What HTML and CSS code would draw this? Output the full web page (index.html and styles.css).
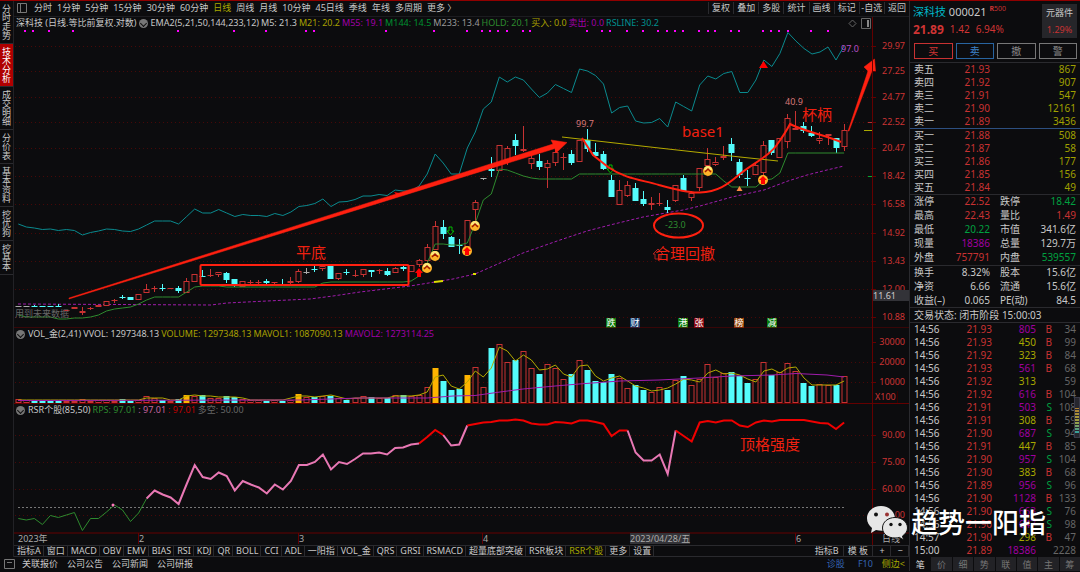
FILE: index.html
```html
<!DOCTYPE html>
<html lang="zh-CN">
<head>
  <meta charset="UTF-8">
  <title>深科技 000021</title>
  <link rel="stylesheet" href="styles.css">
</head>
<body>

  <div class="workspace">
    <nav class="rail">
      <button>分时走势</button>
      <button class="active">技术分析</button>
      <button>成交明细</button>
      <button>分价表</button>
      <button>基本资料</button>
      <button>挖优狗</button>
      <button>挖基本</button>
    </nav>

    <main class="charts">
      <div class="periods">
        <svg class="layout-icon" viewBox="0 0 12 12"><path d="M1.5 1.500h9v9h-9zM4.500 1.500v9"/></svg>
        <div class="period-list">
          <button>分时</button>
          <button>1分钟</button>
          <button>5分钟</button>
          <button>15分钟</button>
          <button>30分钟</button>
          <button>60分钟</button>
          <button class="active">日线</button>
          <button>周线</button>
          <button>月线</button>
          <button>10分钟</button>
          <button>45日线</button>
          <button>季线</button>
          <button>年线</button>
          <button>多周期</button>
          <button>更多 〉</button>
        </div>
        <div class="tools">
          <button>复权</button>
          <button>叠加</button>
          <button>多股</button>
          <button>统计</button>
          <button>画线</button>
          <button>标记</button>
          <button>-自选</button>
          <button>返回</button>
        </div>
      </div>

      <section class="pane">
        <svg id="price" class="plot" viewBox="14 17 895 311">
          <g class="grid" id="priceGrid"></g>
          <g id="dots" fill="#f0f"></g>
          <polyline class="purple dash" points="18,304 211,305 227,303 267,301 310,299 333,296 360,292 385,289 410,286 435,282 453,279 475,274 500,263 523,253 560,240 587,231 610,225 643,217 683,210 700,206 732,197 764,190 788,181 807,175 827,170 844,166"/>
          <path d="M434 282l9-1M473 274h3" stroke="#dd0" stroke-width="2"/>
          <g id="candles"></g>
          <polyline id="rsLine" class="teal"/>
          <polyline id="holdLine" class="green"/>
          <polyline class="yellow" points="562,137 659,148 740,157 778,161"/>
          <text class="note" x="15" y="317">用到未来数据</text>

          <!-- buy / sell marks -->
          <g id="coins"></g>
          <path class="up" d="M419 268l4 5h-2v4h-4v-4h-2zM763.500 61l4.500 7h-9zM394 192l5 1-1 4z"/>
          <path d="M739.500 186l3 5h-6z" fill="#f84"/>
          <path class="down" d="M449 227h3v4h2l-3.500 4-3.500-4h2zM609 165h3v4h2l-3.500 4-3.500-4h2z"/>
          <path class="house" d="M655 259v-5h-2l5-5 5 5h-2v5z"/>

          <!-- hand drawn notes -->
          <path class="arrow" d="M69 298L553 144 551 140 567 142.500 556 153 555 148.500 69 299z"/>
          <path class="arrow" d="M848 131L868 71 864 67 874.500 59 875.500 71 872 71 849 131z"/>
          <path class="pen" d="M582 138L593 155 608 167C625 179 643 180 659 185C680 191 690 193 700 192.500C720 192 730 182 740 174C755 162 768 157 776 146C784 135 788 128 790 124C803 131 822 134 841 142"/>
          <rect class="pen" x="200.500" y="265" width="208" height="20" rx="1"/>
          <ellipse class="pen" cx="678.500" cy="225.500" rx="24.500" ry="12"/>
          <text class="memo" x="296" y="258">平底</text>
          <text class="memo" x="682" y="137">base1</text>
          <text class="memo" x="655" y="259">合理回撤</text>
          <text class="memo" x="802" y="120">杯柄</text>
          <text class="mark pink" x="576" y="127">99.7</text>
          <text class="mark pink" x="785" y="105">40.9</text>
          <text class="mark violet" x="841" y="52">97.0</text>
          <text class="mark green-text" x="665" y="228">-23.0</text>

          <g id="tags"></g>
          <path d="M868 122.500h4" stroke="#a33"/>
          <path d="M864 130.500h8" stroke="#aa0"/>
          <path d="M868 176.500h4" stroke="#0a3"/>
          <path class="frame" d="M14 328H909M872.500 17V328"/>
          <g class="axis" id="priceAxis"></g>
          <rect x="873" y="290" width="36" height="11" fill="#333338"/>
          <text class="cursor" x="873" y="299">11.61</text>
          <path class="tool-icon" d="M849 23.500l3.500-3.500 3.500 3.500-3.500 3.500zM861.500 18.500h9v10h-9z"/>
          <path d="M867 20h2v7h-2z" fill="#888"/>
        </svg>
        <div class="legend">
          <span>深科技 (日线.等比前复权.对数)</span>
          <i class="fold"></i>
          <span>EMA2(5,21,50,144,233,12)</span>
          <span>M5: 21.3</span>
          <span class="c-yellow">M21: 20.2</span>
          <span class="c-purple">M55: 19.1</span>
          <span class="c-green">M144: 14.5</span>
          <span class="c-gray">M233: 13.4</span>
          <span class="c-hold">HOLD: 20.1</span>
          <span class="c-yellow">买入: 0.0</span>
          <span class="c-purple">卖出: 0.0</span>
          <span class="c-teal">RSLINE: 30.2</span>
        </div>
      </section>

      <section class="pane">
        <svg id="volume" class="plot" viewBox="14 328 895 76">
          <path class="grid" d="M15 362.500H872M15 382.500H872"/>
          <g id="bars"></g>
          <polyline id="mavol1" class="yellow"/>
          <polyline class="purple" points="18,400.500 300,400 360,398 427,398 453,396 475,395.500 500,392 523,389 555,386 579,384 620,381 659,380 699,378 732,376 772,375 796,373.500 827,375 844,377"/>
          <path class="frame" d="M14 403.500H909M872.500 328V404"/>
          <g class="axis" id="volAxis"></g>
          <path d="M897.500 391v12" stroke="#300"/>
          <text class="axis-unit" x="875" y="400">X100</text>
        </svg>
        <div class="legend">
          <i class="fold"></i>
          <span>VOL_金(2,41)</span>
          <span>VVOL: 1297348.13</span>
          <span class="c-yellow">VOLUME: 1297348.13</span>
          <span class="c-yellow">MAVOL1: 1087090.13</span>
          <span class="c-purple">MAVOL2: 1273114.25</span>
        </div>
      </section>

      <section class="pane">
        <svg id="strength" class="plot" viewBox="14 404 895 141">
          <path class="grid" d="M15 435.500H872M15 462.500H872M15 489.500H872M15 515.500H872"/>
          <path class="half" d="M18 507.500H844"/>
          <g id="rsr"></g>
          <circle cx="113" cy="505" r="1.500" fill="#f7b"/>
          <text class="memo" x="740" y="450">顶格强度</text>
          <path class="frame" d="M14 533H909M872.500 404V545M138.500 533v11M298.500 533v11M482.500 533v11M795.500 533v11"/>
          <g class="axis" id="rsrAxis"></g>
          <rect x="630" y="533" width="60" height="11" fill="#333338"/>
          <g class="dates">
            <text x="18" y="542">2023年</text>
            <text x="139" y="542">2</text>
            <text x="299" y="542">3</text>
            <text x="483" y="542">4</text>
            <text x="630" y="542">2023/04/28/五</text>
            <text x="796" y="542">6</text>
            <text x="882" y="542">日线</text>
          </g>
        </svg>
        <div class="legend">
          <i class="fold"></i>
          <span>RSR个股(85,50)</span>
          <span class="c-hold">RPS: 97.01</span>
          <span class="c-pink">: 97.01</span>
          <span class="c-red">: 97.01</span>
          <span class="c-dim">多空: 50.00</span>
        </div>
      </section>

      <div class="indicators">
        <button>指标A</button>
        <button>窗口</button>
        <button>MACD</button>
        <button>OBV</button>
        <button>EMV</button>
        <button>BIAS</button>
        <button>RSI</button>
        <button>KDJ</button>
        <button>QR</button>
        <button>BOLL</button>
        <button>CCI</button>
        <button>ADL</button>
        <button>一阳指</button>
        <button>VOL_金</button>
        <button>QRS</button>
        <button>GRSI</button>
        <button>RSMACD</button>
        <button>超量底部突破</button>
        <button>RSR板块</button>
        <button class="active">RSR个股</button>
        <button>更多</button>
        <button>设置</button>
        <span class="spacer"></span>
        <button class="wide">指标B</button>
        <button class="wide">模 板</button>
        <button class="zoom-btn">+</button>
        <button class="zoom-btn">−</button>
      </div>
    </main>

    <footer class="links">
      <svg class="window-icon" viewBox="0 0 11 11"><path d="M.5 .5h10v9h-10zM3 3.500h5"/></svg>
      <a href="#">关联报价</a>
      <a href="#">公司公告</a>
      <a href="#">公司新闻</a>
      <a href="#">公司研报</a>
      <span class="spacer"></span>
      <a href="#" class="blue">诊股</a>
      <a href="#" class="blue f10">F10</a>
      <a href="#" class="side">侧边&lt;</a>
    </footer>
  </div>

  <aside class="quote">
    <header class="stock">
      <div>
        <div class="name"><span class="c-cyan">深科技</span> 000021 <sup><b>R</b>500</sup></div>
        <div class="last"><b>21.89</b><span>1.42</span><span>6.94%</span></div>
      </div>
      <div class="sector">元器件<span>1.29%</span></div>
    </header>

    <div class="orders">
      <button class="buy">买</button>
      <button class="sell">卖</button>
      <button>撤</button>
      <button>警</button>
    </div>

    <table class="book">
      <tbody>
        <tr><th>卖五</th><td>21.93</td><td>867</td></tr>
        <tr><th>卖四</th><td>21.92</td><td>907</td></tr>
        <tr><th>卖三</th><td>21.91</td><td>547</td></tr>
        <tr><th>卖二</th><td>21.90</td><td>12161</td></tr>
        <tr><th>卖一</th><td>21.89</td><td>3436</td></tr>
      </tbody>
    </table>
    <table class="book bids">
      <tbody>
        <tr><th>买一</th><td>21.88</td><td>508</td></tr>
        <tr><th>买二</th><td>21.87</td><td>58</td></tr>
        <tr><th>买三</th><td>21.86</td><td>177</td></tr>
        <tr><th>买四</th><td>21.85</td><td>156</td></tr>
        <tr><th>买五</th><td>21.84</td><td>49</td></tr>
      </tbody>
    </table>

    <table class="facts">
      <tbody>
        <tr><th>涨停</th><td class="up">22.52</td><th>跌停</th><td class="dn">18.42</td></tr>
        <tr><th>最高</th><td class="up">22.43</td><th>量比</th><td class="up">1.49</td></tr>
        <tr><th>最低</th><td class="dn">20.22</td><th>市值</th><td>341.6亿</td></tr>
        <tr><th>现量</th><td class="big">18386</td><th>总量</th><td>129.7万</td></tr>
        <tr><th>外盘</th><td class="up">757791</td><th>内盘</th><td class="dn">539557</td></tr>
      </tbody>
    </table>
    <table class="facts">
      <tbody>
        <tr><th>换手</th><td>8.32%</td><th>股本</th><td>15.6亿</td></tr>
        <tr><th>净资</th><td>6.66</td><th>流通</th><td>15.6亿</td></tr>
        <tr><th>收益(–)</th><td>0.065</td><th>PE(动)</th><td>84.5</td></tr>
      </tbody>
    </table>

    <div class="status">交易状态: 闭市阶段 15:00:03</div>

    <table class="ticks"><tbody id="ticks"></tbody></table>

    <div class="quote-tabs">
      <button class="active">笔</button>
      <button>价</button>
      <button>细</button>
      <button>势</button>
      <button>联</button>
      <button>值</button>
      <button>主</button>
      <button>筹</button>
    </div>
  </aside>

  <div class="meter"></div>

  <div class="watermark">
    <svg viewBox="0 0 42 36">
      <path d="M15 1C7 1 1 6.500 1 13.500c0 4 2 7 5 9.500l-1 5 5-3c2 .6 4 .8 6 .8C23 25.500 29 20 29 13.500S23 1 15 1z" fill="#e6e6e6"/>
      <path d="M29 12.500c-7 0-12.500 4.500-12.500 10.500S22 33 29 33c1.500 0 3-.2 4.500-.6l4 2.600-1-4c3-2 5-5 5-8 0-6-5.500-10.500-12.500-10.500z" fill="#e6e6e6" stroke="#111"/>
      <g fill="#111"><circle cx="10" cy="9.500" r="2"/><circle cx="25" cy="19.500" r="1.700"/><circle cx="34" cy="19.500" r="1.700"/></g>
      <circle cx="21" cy="9.500" r="2" fill="#933"/>
    </svg>
    <span>趋势一阳指</span>
  </div>

  <script src="chart.js"></script>
</body>
</html>
```
FILE: styles.css
```css
* {
  box-sizing: border-box;
}

body {
  margin: 0;
  min-height: 100vh;
  display: grid;
  grid-template-columns: minmax(0, 1fr) 171px;
  align-items: start;
  position: relative;
  background: #0c0c0e;
  border-top: 1px solid #900000;
  color: #c8c8c8;
  font-family: "Noto Sans", "Noto Sans CJK SC", sans-serif;
  font-size: 9px;
  line-height: 12px;
}

button {
  margin: 0;
  padding: 0;
  border: 0;
  background: none;
  color: inherit;
  font: inherit;
  white-space: nowrap;
  cursor: pointer;
}

a {
  color: inherit;
  text-decoration: none;
}

.workspace {
  display: grid;
  grid-template-columns: 14px minmax(0, 1fr);
}

/* left rail */
.rail {
  display: flex;
  flex-direction: column;
  border-right: 1px solid #222226;
}

.rail button {
  width: 13px;
  padding: 3px 0;
  border-bottom: 1px solid #2a2a2e;
  writing-mode: vertical-rl;
  text-align: left;
  line-height: 13px;
}

.rail button.active {
  background: #b00000;
  color: #fff;
}

/* top bar */
.periods {
  display: flex;
  align-items: center;
  height: 16px;
  padding-bottom: 1px;
  border-bottom: 1px solid #1c1c20;
}

.layout-icon {
  width: 12px;
  height: 12px;
  margin: 0 6px 0 2px;
  fill: none;
  stroke: #777;
}

.period-list {
  display: flex;
  flex: 1;
  gap: 5px;
}

.active {
  color: #a8a800;
}

.tools {
  display: flex;
  width: 201px;
}

.tools button {
  flex: 1;
  border-left: 1px solid #2a2a2e;
}

/* chart panes: the legend lies on the plot */
.pane {
  display: grid;
}

.pane > * {
  grid-area: 1 / 1;
}

.plot {
  display: block;
  width: 100%;
}

.legend {
  display: flex;
  align-items: center;
  align-self: start;
  gap: 2px;
  height: 12px;
  padding-left: 2px;
  white-space: nowrap;
}

.fold {
  width: 9px;
  height: 9px;
  margin-right: 1px;
  border-radius: 50%;
  background: #777;
  display: grid;
  place-items: center;
}

.fold::before {
  content: "";
  width: 4px;
  height: 4px;
  border: solid #111;
  border-width: 0 1px 1px 0;
  transform: rotate(45deg);
}

.c-yellow { color: #a8a000; }
.c-purple { color: #a000a8; }
.c-green { color: #009030; }
.c-gray { color: #999; }
.c-hold { color: #2e8b2e; }
.c-teal { color: #009090; }
.c-cyan { color: #00b8c8; }
.c-pink { color: #c864a0; }
.c-red { color: #c00000; }
.c-dim { color: #666; }

svg text {
  font-size: 9px;
}

polyline {
  fill: none;
  stroke-width: 1;
}

.grid { stroke: #480808; stroke-dasharray: 1 3; }
.frame { stroke: #640000; fill: none; }
.teal { stroke: #0a8a8e; }
.green { stroke: #2e8a2e; }
.yellow { stroke: #b4aa00; }
.purple { stroke: #a01cac; }
.dash { stroke-dasharray: 3 2; }
.half { stroke: #777; stroke-dasharray: 2 2; }
.rise { stroke: #c83232; fill: #0c0c0e; }
.fall { stroke: #54fcfc; fill: #54fcfc; }
.hot { stroke: #ffb400; fill: #ffb400; }
.flat { stroke: #aaa; fill: #aaa; }
.strong { stroke: #f00000; stroke-width: 2; }
.mid { stroke: #e878b4; stroke-width: 2; }

.axis text {
  fill: #cc3434;
  text-anchor: end;
}

.axis path { stroke: #640000; }
.axis-unit { fill: #cc3434; }
.cursor { fill: #ccc; }
.dates { fill: #aaa; }
.note { fill: #666; }
.tool-icon { fill: none; stroke: #666; }

svg .memo {
  fill: #f02010;
  font-size: 15px;
}

.pen {
  fill: none;
  stroke: #ff2010;
  stroke-width: 2;
}

.arrow { fill: #ff2010; stroke: #ff2010; stroke-width: 0.5; }
.up { fill: #f00; }
.down { fill: none; stroke: #0b0; }
.house { fill: none; stroke: #a22; }
.pink { fill: #d87878; }
.violet { fill: #b450c8; }
.green-text { fill: #2e8b2e; }

.tag text {
  fill: #fff;
  text-anchor: middle;
}

/* bottom bars */
.indicators {
  display: flex;
  height: 12px;
  border-top: 1px solid #2a2a2e;
  border-bottom: 1px solid #2a2a2e;
  line-height: 10px;
}

.indicators button {
  padding: 0 2px 0 3px;
  border-right: 1px solid #2a2a2e;
}

.indicators .wide {
  padding: 0 4px;
}

.indicators .zoom-btn {
  width: 18px;
}

.spacer {
  flex: 1;
}

.links {
  grid-column: 1 / -1;
  display: flex;
  align-items: center;
  gap: 9px;
  height: 14px;
  padding: 0 4px;
}

.window-icon {
  width: 11px;
  height: 11px;
  margin-right: -2px;
  fill: none;
  stroke: #777;
}

.blue { color: #3464b4; }
.f10 { margin-left: 4px; }
.side { color: #a8a800; }

/* quote panel */
.quote {
  border-left: 1px solid #2a2a2e;
  font-size: 10px;
  line-height: 13px;
}

.stock {
  display: flex;
  justify-content: space-between;
  padding: 3px 3px 4px;
}

.name {
  font-size: 11px;
  line-height: 15px;
}

.name sup {
  color: #c83232;
  font-size: 7px;
  line-height: 0;
}

.last {
  display: flex;
  align-items: center;
  gap: 6px;
  height: 20px;
  color: #d03434;
}

.last b {
  font-size: 12px;
}

.sector {
  width: 35px;
  height: 34px;
  padding-top: 2px;
  background: #26262a;
  font-size: 9px;
  text-align: center;
}

.sector span {
  display: block;
  margin-top: 4px;
  color: #c83232;
}

.orders {
  display: grid;
  grid-template-columns: repeat(4, 1fr);
  gap: 3px;
  padding: 0 3px 3px 4px;
  border-bottom: 1px solid #2a2a2e;
}

.orders button {
  height: 16px;
  border: 1px solid #777;
  color: #888;
}

.orders .buy { border-color: #c83232; color: #d03434; }
.orders .sell { border-color: #2864a0; color: #3c82c8; }

table {
  width: 100%;
  border-collapse: collapse;
  table-layout: fixed;
}

th, td {
  padding: 0;
  font-weight: normal;
  text-align: right;
  white-space: nowrap;
}

th:first-child, .facts th {
  padding-left: 4px;
  text-align: left;
}

td:last-child {
  padding-right: 4px;
}

.book td { color: #c83232; width: 49px; }
.book th { width: 31px; }
.book td:last-child { color: #a0a000; width: auto; }
.bids { border-top: 1px solid #2d4f80; }

.book tr, .ticks tr { height: 13px; }
.facts tr { height: 14px; }
.facts { border-top: 1px solid #2a2a2e; }
.facts th { width: 43px; }
.facts td { width: 37px; }
.facts th + td + th { width: 46px; padding-left: 10px; }
.facts td:last-child { width: auto; }
.facts .up { color: #c83232; }
.facts .dn { color: #00a040; }
.facts .big { color: #a000a0; }

.status {
  height: 16px;
  padding: 1px 0 0 4px;
  border: solid #2a2a2e;
  border-width: 1px 0;
}

.ticks td { color: #c83232; }
.ticks td:first-child { width: 36px; padding-left: 4px; color: #c8c8c8; text-align: left; }
.ticks td:nth-child(2) { width: 46px; }
.ticks td:nth-child(3) { width: 44px; color: #a8a800; }
.ticks td:nth-child(4) { width: 16px; }
.ticks td:last-child { color: #666; }
.ticks .large td:nth-child(3) { color: #a000a0; }
.ticks .S td:nth-child(4) { color: #00a040; }

.quote-tabs {
  display: grid;
  grid-template-columns: repeat(8, 1fr);
  gap: 1px;
}

.quote-tabs button {
  height: 14px;
  background: #222226;
  color: #777;
  font-size: 9px;
}

.quote-tabs .active {
  background: none;
  color: #ddd;
}

/* overlays */
.meter {
  position: absolute;
  top: 396px;
  right: 0;
  width: 6px;
  height: 41px;
  border: 1px solid #3a3a48;
  background: repeating-linear-gradient(transparent 0 2px, #26262e 2px 3px), linear-gradient(#26262e 25%, #b08030 26%, #a0a040 60%, #30a0a0 90%, #26262e 91%);
}

.watermark {
  position: absolute;
  right: 34px;
  bottom: 31px;
  display: flex;
  align-items: center;
  gap: 3px;
  color: #fff;
  font-size: 27px;
  font-weight: 500;
  line-height: 36px;
  text-shadow: 0 0 2px #000;
}

.watermark svg {
  width: 42px;
  height: 36px;
}
```
FILE: chart.js
```js
const NS = 'http://www.w3.org/2000/svg';
const $ = id => document.getElementById(id);
const x = i => 18.3 + i * 8.017;

function add(parent, tag, attrs, text) {
  const el = document.createElementNS(NS, tag);
  for (const key in attrs) el.setAttribute(key, attrs[key]);
  if (text) el.textContent = text;
  parent.appendChild(el);
  return el;
}

const points = (ys, from = 0) => ys.map((y, i) => x(i + from).toFixed(1) + ',' + y).join(' ');

// r = rise, c = fall, g = flat: body top, body bottom, high, low
const candles = `
g306,306,306,306 g306,306,306,306 c306,306,305,307 c306,307,306,307 c306,306,306,306 c306,306,304,307
r310,310,310,311 r307,309,307,309 r311,313,307,315 r308,308,307,310 r305,307,305,307 r301,306,301,306
r300,301,299,303 c297,298,295,299 c297,300,297,300 r294,300,294,300 r289,293,284,293 r288,288,286,292
c288,288,284,291 r288,289,288,289 c288,291,286,293 r281,293,278,293 r274,282,274,282 c276,276,270,277
r275,276,269,277 r272,275,272,277 c273,280,272,283 c279,286,279,287 r281,287,281,287 r282,282,280,284
r282,282,280,284 c281,283,279,284 r282,283,282,284 c284,284,279,286 r281,283,277,284 r271,282,269,283
g272,272,268,274 c269,270,265,272 r266,269,266,271 c266,279,266,279 r273,279,273,280 c272,273,269,275
r275,275,270,277 r269,275,269,277 c270,272,270,277 r270,271,269,274 c271,275,268,276 r268,273,267,273
c267,269,264,271 r265,272,265,272 r260,265,259,267 r247,261,244,264 r226,250,221,250 c227,234,220,239
c237,247,236,247 c245,246,239,254 r220,247,220,247 r202,210,200,228 g178,178,178,180 c169,171,157,177
r145,171,145,171 r148,160,146,165 c140,146,134,155 r149,151,126,152 r158,164,155,169 c161,167,154,170
r163,168,160,188 r152,163,149,166 r157,158,153,170 c154,163,150,165 r140,162,140,162 c140,149,129,152
c152,156,143,158 c154,169,151,170 c180,197,175,197 r190,205,180,205 r185,196,181,197 c188,201,183,201
c199,204,191,206 r203,205,197,210 r203,204,193,206 c207,210,200,213 r185,201,185,202 c178,191,175,191
r193,198,191,201 r168,188,168,191 r159,166,148,172 r162,165,157,166 r156,158,146,160 c144,153,138,161
c162,175,159,178 c178,178,170,186 r165,175,163,175 r145,173,141,179 c140,153,140,155 r138,158,138,158
r118,142,114,148 r128,130,111,130 c126,131,122,133 c133,136,126,137 r138,141,132,144 r134,136,134,145
c138,148,138,153 r130,147,124,151`.trim().split(/\s+/).map(s => [s[0], ...s.slice(1).split(',').map(Number)]);

const volumes = [
  399, 400, 400, 401, 401, 401, 401, 401, 399, 401, 400, 400, 401, 399, 401, 400, 396, 398, 400, 401,
  399, 395, 396, 395, 398, 398, 396, 397, 399, 400, 400, 401, 400, 401, 400, 394, 397, 397, 396, 396,
  398, 400, 398, 396, 397, 398, 398, 395, 395, 396, 395, 387, 368, 381, 390, 389, 375, 367, 387, 348,
  344, 362, 360, 351, 368, 374, 364, 368, 379, 374, 360, 370, 381, 382, 374, 378, 388, 385, 390, 392,
  387, 390, 380, 376, 385, 379, 364, 377, 373, 372, 376, 383, 379, 362, 375, 372, 363, 371, 383, 386,
  384, 385, 385, 376];
const hotDays = [21, 35, 52, 56];

const rs = [
  224, 227, 228, 229.5, 229, 230.5, 229.5, 230.5, 235, 232.5, 231, 229, 229.5, 231, 231.5, 229, 225, 221, 221, 221,
  224, 216.5, 209, 213, 213, 209.5, 213, 216.5, 214.5, 215.5, 215.5, 216.5, 213.5, 215.5, 212, 206.5, 205.5, 203.5, 199, 206.5,
  202, 201.5, 199.5, 196, 196, 194.5, 195.5, 190, 191, 191, 186, 174, 154, 163, 174, 174, 148, 132, 109, 102,
  77, 82, 77, 80, 89, 97.5, 93, 84.5, 88.5, 92.5, 69, 71, 75.5, 84, 113, 107.5, 106, 121, 123, 122.5,
  118.5, 127, 102, 106.5, 111, 85, 76, 79, 73.5, 71.5, 92.5, 92.5, 80, 60, 66.5, 53.5, 32.5, 41, 48.5, 54,
  52, 47, 60, 46];

const hold = [
  315, 317, 317, 317, 317, 319, 319, 318, 318, 317, 315, 311, 309, 308, 307, 304, 300, 297, 297, 297,
  297, 292, 287, 286, 286, 286, 287, 287, 287, 287, 287, 287, 287, 287, 287, 287, 287, 287, 283, 282,
  282, 282, 282, 282, 282, 282, 282, 282, 282, 281, 276, 263, 244, 244, 245, 245, 243, 223, 200, 194,
  169, 170, 173, 176, 178, 179, 179, 179, 179, 179, 174, 174, 174, 174, 174, 174, 174, 174, 174, 174,
  174, 174, 174, 174, 174, 174, 174, 174, 181, 187, 187, 187, 187, 180, 179, 173, 153, 153, 153, 153,
  153, 153, 153, 153];

const mavol1 = [
  400, 400, 400, 400, 400, 400, 400, 400, 400, 400, 400, 400, 400, 400, 400, 400, 398, 398, 398, 400,
  400, 396, 395, 396, 396, 397, 397, 397, 398, 400, 400, 400, 400, 400, 398, 396, 396, 397, 396, 395,
  397, 399, 398, 398, 398, 398, 398, 396, 396, 396, 395, 392, 377, 375, 386, 389, 382, 371, 377, 368,
  347, 351, 361, 355, 360, 370, 369, 365, 374, 377, 366, 365, 376, 381, 378, 376, 381, 386, 388, 391,
  390, 388, 384, 379, 380, 382, 373, 370, 374, 373, 375, 379, 382, 371, 369, 373, 368, 367, 378, 385,
  385, 385, 385, 381];

const rsr = [
  518.5, 520, 518.5, 524.5, 515.5, 517.5, 515, 512.5, 530.5, 518.5, 518.5, 512, 505, 510, 521.5, 513, 498.5, 490.5, 494.5, 497.5,
  504, 484, 465, 477, 479, 472.5, 476, 490.5, 481, 484.5, 487.5, 493.5, 484.5, 489.5, 481, 465, 465, 462, 454.5, 469.5,
  462, 464, 459, 453.5, 453.5, 452.5, 454.5, 448, 447.5, 444.5, 443.5, 437, 430, 435, 445.5, 444.5, 425.5, 424, 422.5, 422,
  420.5, 420.5, 419.5, 420.5, 423.5, 424.5, 424.5, 422, 422.5, 423.5, 420.5, 420.5, 422, 424, 436, 430.5, 430.5, 452.5, 460.5, 460.5,
  454.5, 474, 430.5, 436, 441.5, 422.5, 421, 422.5, 420.5, 420.5, 425.5, 427, 422.5, 420.5, 421.5, 420, 420, 420, 420, 421.5,
  423, 423.5, 429, 422.5];

const kinds = { r: 'rise', c: 'fall', g: 'flat' };

candles.forEach(([kind, top, bottom, high, low], i) => {
  const cx = Math.round(x(i) - 0.5) + 0.5;
  const cls = kinds[kind];
  add($('candles'), 'path', { class: cls, d: `M${cx} ${high}V${low}` });
  if (bottom - top < 2) {
    add($('candles'), 'path', { class: cls, d: `M${cx - 3} ${top + 0.5}h6` });
  } else {
    add($('candles'), 'rect', { class: cls, x: cx - 2.5, y: top + 0.5, width: 5, height: bottom - top - 1 });
  }
});

volumes.forEach((top, i) => {
  const cx = Math.round(x(i) - 0.5) + 0.5;
  const cls = hotDays.includes(i) ? 'hot' : kinds[candles[i][0] === 'g' ? 'r' : candles[i][0]];
  add($('bars'), 'rect', { class: cls, x: cx - 2.5, y: top + 0.5, width: 5, height: 402 - top });
});

$('rsLine').setAttribute('points', points(rs));
$('holdLine').setAttribute('points', points(hold));
$('mavol1').setAttribute('points', points(mavol1));

[[0, 16, 'green'], [16, 50, 'mid'], [50, 53, 'strong'], [53, 56, 'mid'], [56, 76, 'strong'], [76, 82, 'mid'], [82, 103, 'strong']]
  .forEach(([a, b, cls]) => add($('rsr'), 'polyline', { class: cls, points: points(rsr.slice(a, b + 1), a) }));

[25, 33, 49, 73, 178, 234, 266, 306, 314, 386, 434, 467, 482, 490, 498, 507, 523, 530, 587, 602, 610, 627, 643,
  658, 667, 675, 683, 699, 708, 715, 731, 739, 763, 771, 779, 788, 811, 828]
  .forEach(dx => add($('dots'), 'rect', { x: dx - 1, y: 30, width: 2, height: 2 }));

function axis(group, rows) {
  rows.forEach(([label, y]) => {
    add(group, 'path', { d: `M872 ${y}.5h4` });
    add(group, 'text', { x: 905, y: y + 3 }, label);
  });
}

const prices = [['29.97', 46], ['27.25', 71], ['24.77', 97], ['22.52', 122], ['20.47', 148], ['18.42', 176],
  ['16.58', 204], ['14.92', 233], ['13.43', 261], ['12.00', 289], ['10.88', 317]];
axis($('priceAxis'), prices);
prices.forEach(([, y]) => add($('priceGrid'), 'path', { d: `M15 ${y}.5H872` }));
axis($('volAxis'), [['30000', 342], ['20000', 362], ['10000', 382]]);
axis($('rsrAxis'), [['90.00', 435], ['75.00', 462], ['60.00', 489], ['45.00', 515]]);

// gold coins under the candles
[[427, 268, 0], [435, 256, 0], [475, 226, 0], [708, 171, 0], [467, 251, 1], [763, 180, 1]].forEach(([cx, cy, strong]) => {
  const g = add($('coins'), 'g', { transform: `translate(${cx} ${cy})` });
  add(g, 'circle', { r: 5, fill: '#ffb428' });
  if (strong) {
    add(g, 'path', { d: 'M0 -4L4 0H2V4H-2V0H-4z', fill: '#f00' });
  } else {
    add(g, 'path', { d: 'M-4 -1A4 4 0 0 1 4 -1z', fill: '#ffe97a' });
    add(g, 'path', { d: 'M-3 1L0 -2L3 1', fill: 'none', stroke: '#a01800', 'stroke-width': 1.5 });
  }
});

[['跌', 611, '#0a7a0a'], ['财', 635, '#123c6e'], ['港', 683, '#0a7a0a'], ['张', 699, '#8c0a14'], ['榜', 739, '#96460a'], ['减', 772, '#0a7a0a']]
  .forEach(([label, cx, fill]) => {
    const g = add($('tags'), 'g', { class: 'tag' });
    add(g, 'rect', { x: cx - 5, y: 318, width: 10, height: 10, fill });
    add(g, 'text', { x: cx, y: 326 }, label);
  });

const ticks = [
  ['14:56', '21.93', 805, 'B', 34],
  ['14:56', '21.93', 450, 'B', 99],
  ['14:56', '21.92', 323, 'B', 84],
  ['14:56', '21.93', 561, 'B', 68],
  ['14:56', '21.92', 313, '', 59],
  ['14:56', '21.92', 616, 'B', 104],
  ['14:56', '21.91', 503, 'S', 108],
  ['14:56', '21.91', 308, 'B', 59],
  ['14:56', '21.90', 687, 'S', 94],
  ['14:56', '21.91', 447, 'B', 85],
  ['14:56', '21.90', 957, 'S', 104],
  ['14:56', '21.90', 383, 'B', 68],
  ['14:56', '21.89', 956, 'S', 96],
  ['14:56', '21.90', 1128, 'B', 133],
  ['14:56', '21.90', 663, 'S', 76],
  ['14:56', '21.90', 647, 'S', 98],
  ['14:57', '21.90', 298, 'B', 47],
  ['15:00', '21.89', 18386, '', 2228]
];

$('ticks').innerHTML = ticks.map(row => `
  <tr class="${row[3]} ${row[2] > 500 ? 'large' : ''}">${row.map(cell => `<td>${cell}</td>`).join('')}</tr>`).join('');
```
